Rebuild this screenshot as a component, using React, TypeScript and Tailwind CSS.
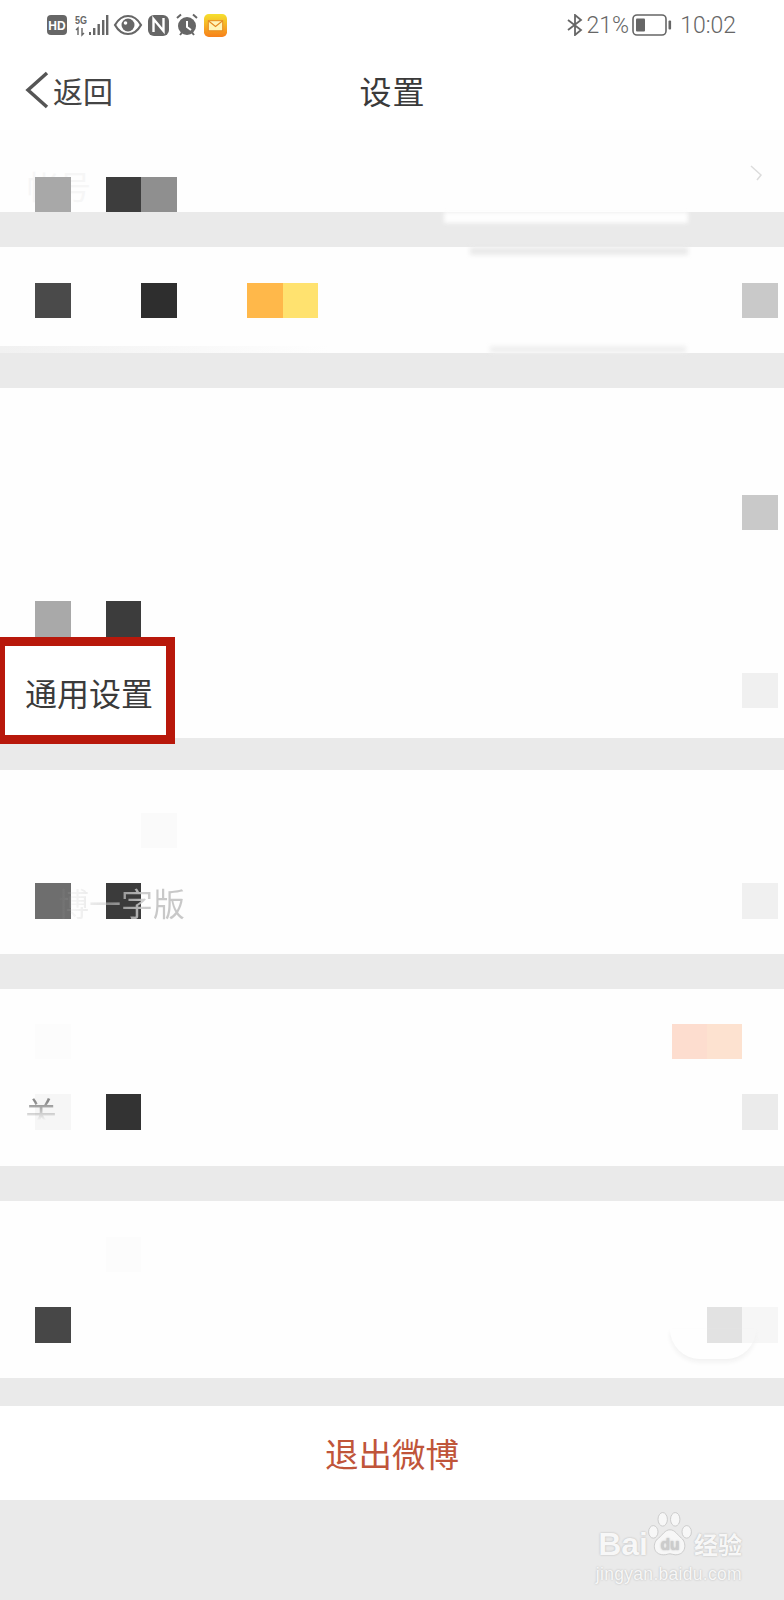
const cell = "relative h-[35.35px]";

type Cell = { col: number; color: string };

function MosaicRow({ cells, className = "" }: { cells: Cell[]; className?: string }) {
  return (
    <div className={`grid grid-cols-[repeat(22,35.35px)] ${className}`}>
      {cells.map((c) => (
        <div key={c.col} className={cell} style={{ gridColumnStart: c.col + 1, gridRowStart: 1, backgroundColor: c.color }} />
      ))}
    </div>
  );
}

function Gap({ className = "h-[35px]", children }: { className?: string; children?: React.ReactNode }) {
  return <div className={`relative bg-[#eaeaea] ${className}`}>{children}</div>;
}

function StatusIcons() {
  return (
    <div className="flex items-center">
      <svg width="157" height="26" viewBox="0 0 157 26" fill="#666">
        <rect x="0" y="3" width="20" height="20" rx="4" />
        <text x="10" y="18" textAnchor="middle" fontSize="12" fontWeight="700" fill="#fff" fontFamily="Liberation Sans">HD</text>
        <text x="28" y="12" fontSize="10" fontWeight="700" textLength="12" lengthAdjust="spacingAndGlyphs" fontFamily="Liberation Sans">5G</text>
        <path d="M31 23v-7l-2 2M35 16v7l2-2" fill="none" stroke="#666" strokeWidth="1.400" />
        <rect x="42" y="20" width="2" height="3" />
        <rect x="46" y="16" width="2.400" height="7" />
        <rect x="50.500" y="12" width="2.400" height="11" />
        <rect x="55" y="8" width="2.400" height="15" />
        <rect x="59" y="3" width="2.400" height="20" />
        <path d="M68 13c3.600-6.400 8.200-9 13-9s9.400 2.600 13 9c-3.600 6.400-8.200 9-13 9s-9.400-2.600-13-9z" fill="none" stroke="#666" strokeWidth="2.200" />
        <circle cx="81" cy="13" r="6.500" />
        <circle cx="78.500" cy="11" r="1.800" fill="#fff" />
        <rect x="101" y="3" width="21" height="21" rx="6" />
        <path d="M106.500 20V7l10 12V6" fill="none" stroke="#fff" strokeWidth="2.400" />
        <circle cx="140" cy="14" r="9" />
        <path d="M140 9v6l4 3" stroke="#fff" strokeWidth="2" fill="none" />
        <path d="M130 6l4-3.500M150 6l-4-3.500M133 23l2-2.500M147 23l-2-2.500" stroke="#666" strokeWidth="2" />
      </svg>
      <svg width="23" height="23" viewBox="0 0 24 24">
        <defs>
          <linearGradient id="mailBg" x1="0" y1="0" x2="0" y2="1">
            <stop offset="0" stopColor="#f5e02e" />
            <stop offset="1" stopColor="#f7801b" />
          </linearGradient>
        </defs>
        <rect width="24" height="24" rx="5" fill="url(#mailBg)" />
        <rect x="4.500" y="7" width="15" height="10.500" fill="#fff6b8" stroke="#e58a1f" strokeWidth="1" />
        <path d="M4.500 7l7.500 6 7.500-6" fill="none" stroke="#e58a1f" strokeWidth="1.200" />
      </svg>
    </div>
  );
}

function StatusRight() {
  return (
    <div className="flex items-center text-[23px] leading-none font-light text-[#666] font-['Roboto',sans-serif]">
      <svg width="16" height="22" viewBox="0 0 16 22" fill="none" stroke="#666" strokeWidth="1.800">
        <path d="M1 6l13 10-6 5V1l6 5L1 16" />
      </svg>
      <span className="ml-[4px]">21%</span>
      <svg width="40" height="22" viewBox="0 0 40 22" className="ml-[3px]">
        <rect x="1" y="1" width="33" height="20" rx="4" fill="none" stroke="#666" strokeWidth="1.600" />
        <rect x="4" y="4.500" width="9" height="13" rx="1" fill="#666" />
        <rect x="36.500" y="6.500" width="2.600" height="9" rx="1" fill="#666" />
      </svg>
      <span className="ml-[8px]">10:02</span>
    </div>
  );
}

function Header() {
  return (
    <div className="bg-white h-[130px]">
      <div className="flex items-center justify-between h-[50px] pl-[47px] pr-[48px]">
        <StatusIcons />
        <StatusRight />
      </div>
      <div className="flex items-center justify-between h-[80px] pl-[25px] pr-[24px]">
        <div className="flex items-center w-[100px] text-[30px] text-[#444]">
          <svg width="24" height="38" viewBox="0 0 24 38" fill="none" stroke="#555" strokeWidth="3.500">
            <path d="M22 2L3 19l19 17" />
          </svg>
          <span className="ml-[4px] whitespace-nowrap">返回</span>
        </div>
        <div className="text-[32px] text-[#3a3a3a] tracking-[1px]">设置</div>
        <div className="w-[100px]" />
      </div>
    </div>
  );
}

function BaiduMark() {
  return (
    <div className="absolute right-[42px] bottom-[15px] flex flex-col items-end text-[#f7f7f7] [text-shadow:0_0_2px_#b0b0b0]">
      <div className="flex items-end">
        <span className="text-[32px] leading-[30px] font-bold font-['Liberation_Sans',sans-serif]">Bai</span>
        <svg width="48" height="48" viewBox="0 0 44 46" fill="#f7f7f7" stroke="#c4c4c4" strokeWidth="0.800" className="-ml-[2px]">
          <ellipse cx="6" cy="20" rx="4.500" ry="6" />
          <ellipse cx="15" cy="8" rx="4.500" ry="6.500" />
          <ellipse cx="27" cy="8" rx="4.500" ry="6.500" />
          <ellipse cx="38" cy="20" rx="4.500" ry="6" />
          <path d="M22 18c5 0 7 5 11 8 5 4 5 16-6 16-2 0-3-1-5-1s-3 1-6 1C5 42 5 30 11 26c4-3 6-8 11-8z" />
          <text x="22" y="37" textAnchor="middle" fontSize="15" fontWeight="700" fill="#cccccc" stroke="none" fontFamily="Liberation Sans">du</text>
        </svg>
        <span className="text-[24px] leading-[30px] font-bold">经验</span>
      </div>
      <span className="text-[17.500px] leading-[22px] mt-[4px] tracking-[0.300px] font-['Liberation_Sans',sans-serif]">jingyan.baidu.com</span>
    </div>
  );
}

export default function App() {
  return (
    <div className="w-[784px] h-[1600px] overflow-hidden bg-[#eaeaea] font-['Noto_Sans_CJK_SC','Liberation_Sans',sans-serif]">
      <Header />

      {/* 帐号 */}
      <div className="bg-[#fefefe] h-[82px] pt-[35px]">
        <div className="flex justify-between h-[12px] pl-[27px] pr-[20px]">
          <span className="text-[32px] leading-[40px] text-[#f6f6f6]">帐号</span>
          <svg width="16" height="18" viewBox="0 0 16 18" fill="none" stroke="#dcdcdc" strokeWidth="1.500">
            <path d="M3 1l10 9-4 5" />
          </svg>
        </div>
        <MosaicRow cells={[{ col: 1, color: "#a8a8a8" }, { col: 3, color: "#3d3d3d" }, { col: 4, color: "#8f8f8f" }]} />
      </div>

      <Gap>
        <div className="absolute left-[444px] top-0 w-[244px] h-[11px] bg-[#fefefe] blur-[2px]" />
        <div className="absolute left-[470px] top-full w-[218px] h-[8px] bg-[#eaeaea] blur-[2px]" />
      </Gap>

      <div className="bg-[#fefefe] h-[106px] pt-[36px]">
        <MosaicRow
          cells={[
            { col: 1, color: "#4a4a4a" },
            { col: 4, color: "#2e2e2e" },
            { col: 7, color: "#ffb84a" },
            { col: 8, color: "#ffe26f" },
            { col: 21, color: "#c9c9c9" },
          ]}
        />
      </div>

      <Gap>
        <div className="absolute left-[490px] bottom-full w-[196px] h-[7px] bg-[#efefef] blur-[2px]" />
        <div className="absolute left-0 bottom-full w-[330px] h-[7px] bg-linear-to-r from-[#f1f1f1] to-transparent" />
      </Gap>

      <div className="relative bg-[#fefefe] h-[350px] pt-[107px]">
        <MosaicRow cells={[{ col: 21, color: "#c9c9c9" }]} />
        <MosaicRow className="mt-[71px]" cells={[{ col: 1, color: "#a9a9a9" }, { col: 3, color: "#3c3c3c" }]} />
        <MosaicRow className="mt-[36px]" cells={[{ col: 21, color: "#f0f0f0" }]} />
        <div className="absolute left-0 top-[249px] z-10 flex items-center w-[175px] h-[107px] pl-[20px] pt-[2px] bg-white border-l-[5px] border-r-[9px] border-y-[9px] border-[#b8180b] text-[32px] leading-none text-[#3a3a3a] whitespace-nowrap">
          通用设置
        </div>
      </div>

      <Gap className="h-[32px]" />

      <div className="relative bg-[#fefefe] h-[184px] pt-[43px]">
        <MosaicRow cells={[{ col: 4, color: "#fafafa" }]} />
        <MosaicRow className="mt-[35px]" cells={[{ col: 1, color: "#6e6e6e" }, { col: 3, color: "#3b3b3b" }, { col: 21, color: "#f0f0f0" }]} />
        <span className="absolute left-[25px] top-[109px] text-[32px] leading-[46px] whitespace-nowrap bg-linear-to-r from-transparent from-[20%] to-[#c8c8c8] to-[80%] bg-clip-text text-transparent">微博一字版</span>
      </div>

      <Gap />

      <div className="relative bg-[#fefefe] h-[177px] pt-[35px]">
        <MosaicRow cells={[{ col: 1, color: "#fcfcfc" }, { col: 19, color: "#fdddcf" }, { col: 20, color: "#fde2d0" }]} />
        <MosaicRow className="mt-[35px]" cells={[{ col: 1, color: "#f6f6f6" }, { col: 3, color: "#333333" }, { col: 21, color: "#ebebeb" }]} />
        <span className="absolute left-[25px] top-[99px] text-[32px] leading-[46px] whitespace-nowrap bg-linear-to-b from-[#8a8a8a] from-[30%] to-transparent to-[70%] bg-clip-text text-transparent">关</span>
      </div>

      <Gap />

      <div className="relative bg-[#fefefe] h-[177px] pt-[36px]">
        <MosaicRow cells={[{ col: 3, color: "#fcfcfc" }]} />
        <MosaicRow className="mt-[35px]" cells={[{ col: 1, color: "#474747" }, { col: 20, color: "#e2e2e2" }, { col: 21, color: "#f6f6f6" }]} />
        <div className="absolute left-[670px] top-[128px] w-[86px] h-[30px] rounded-b-full shadow-[0_3px_5px_#f1f1f1]" />
      </div>

      <Gap className="h-[28px]" />

      <div className="flex items-center justify-center bg-white h-[94px] text-[33.500px] leading-none text-[#c0553a]">退出微博</div>

      <Gap className="h-[100px]">
        <BaiduMark />
      </Gap>
    </div>
  );
}
